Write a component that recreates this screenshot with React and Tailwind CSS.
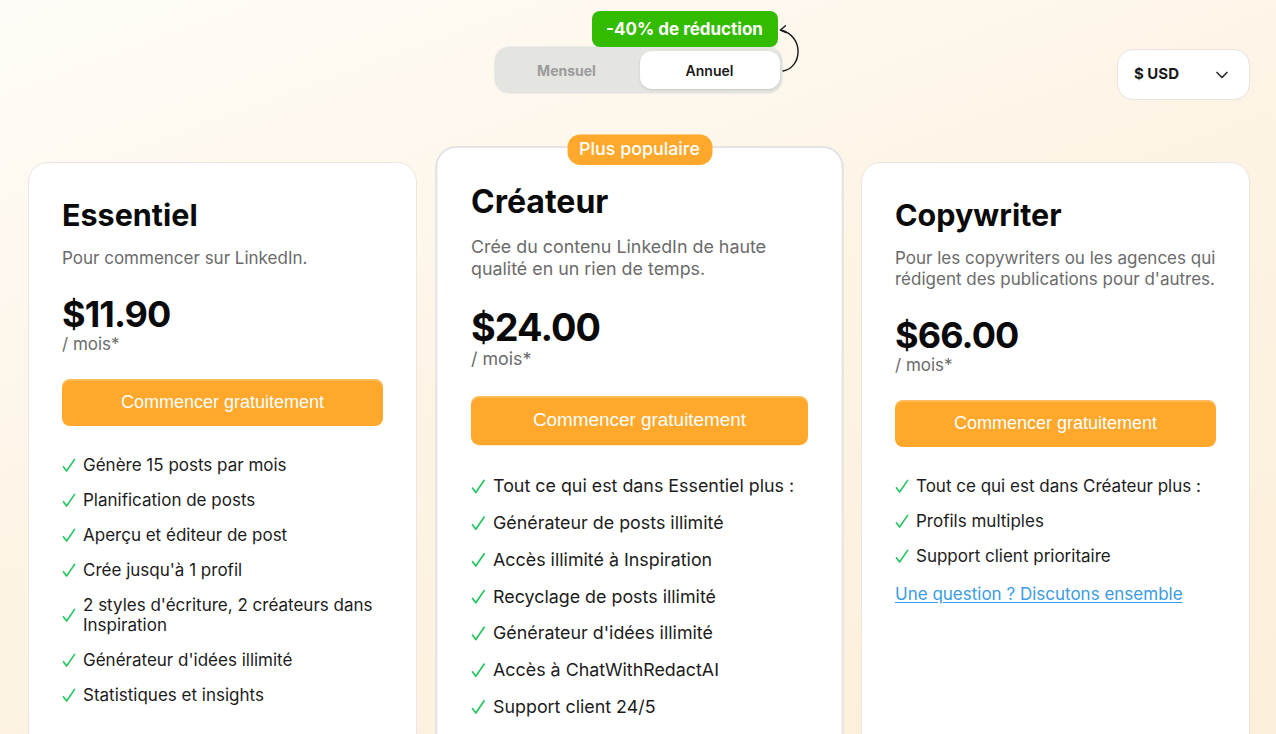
import React, { useState } from 'react';
import { ChevronDown } from 'lucide-react';

const plans = [
  {
    key: 'essentiel',
    name: 'Essentiel',
    desc: 'Pour commencer sur LinkedIn.',
    price: '$11.90',
    features: [
      'Génère 15 posts par mois',
      'Planification de posts',
      'Aperçu et éditeur de post',
      "Crée jusqu'à 1 profil",
      "2 styles d'écriture, 2 créateurs dans Inspiration",
      "Générateur d'idées illimité",
      'Statistiques et insights',
    ],
  },
  {
    key: 'createur',
    name: 'Créateur',
    desc: 'Crée du contenu LinkedIn de haute qualité en un rien de temps.',
    price: '$24.00',
    popular: true,
    features: [
      'Tout ce qui est dans Essentiel plus :',
      'Générateur de posts illimité',
      'Accès illimité à Inspiration',
      'Recyclage de posts illimité',
      "Générateur d'idées illimité",
      'Accès à ChatWithRedactAI',
      'Support client 24/5',
    ],
  },
  {
    key: 'copywriter',
    name: 'Copywriter',
    desc: "Pour les copywriters ou les agences qui rédigent des publications pour d'autres.",
    price: '$66.00',
    link: 'Une question ? Discutons ensemble',
    features: [
      'Tout ce qui est dans Créateur plus :',
      'Profils multiples',
      'Support client prioritaire',
    ],
  },
];

function Check() {
  return (
    <svg width="14" height="16" viewBox="0 0 14 16" className="shrink-0">
      <path d="M1.4 9.8 L4.6 14 L12.6 2.4" fill="none" stroke="#22c55e" strokeWidth="1.6" strokeLinecap="round" strokeLinejoin="round" />
    </svg>
  );
}

function PlanCard({ plan }) {
  return (
    <div
      className={
        plan.popular
          ? 'relative w-[389px] min-h-[600px] shrink-0 origin-top scale-105 rounded-[20px] border-2 border-[#e3e3e3] bg-white px-[32px] pt-[33px]'
          : 'relative mt-[16px] w-[389px] min-h-[600px] shrink-0 rounded-[20px] border border-[#ebe6de] bg-white px-[33px] pt-[34px]'
      }
    >
      {plan.popular && (
        <div className="absolute left-1/2 -top-[13px] -translate-x-1/2 h-[29px] w-[138px] rounded-[12px] bg-[#ffa82b] flex items-center justify-center text-white text-[17px] font-medium">
          Plus populaire
        </div>
      )}

      <h2 className="text-[30.5px] leading-[36px] font-bold text-[#0a0a0a]">{plan.name}</h2>
      <p className="mt-[15px] text-[17px] leading-[21px] text-[#6b6b6b]">{plan.desc}</p>

      <p className="mt-[27px] text-[36px] leading-[36px] font-bold tracking-tight text-[#0a0a0a]">{plan.price}</p>
      <p className="text-[17px] leading-[24px] text-[#6b6b6b]">/ mois*</p>

      <button className="mt-[23px] w-full h-[47px] rounded-lg bg-[#ffa82b] shadow-[inset_0_2px_0_rgba(255,255,255,0.22)] text-white text-[18px] font-['Liberation_Sans',Arial,sans-serif]">
        Commencer gratuitement
      </button>

      <ul className="mt-[29px] flex flex-col gap-[15px]">
        {plan.features.map(f => (
          <li key={f} className="flex items-center gap-[7px] text-[17px] leading-[20px] text-[#1c1c1c]">
            <Check />
            <span>{f}</span>
          </li>
        ))}
      </ul>

      {plan.link && (
        <a href="#" className="block mt-[18px] text-[17px] leading-[20px] text-[#3a9be6] underline underline-offset-2">
          {plan.link}
        </a>
      )}
    </div>
  );
}

export default function App() {
  const [billing, setBilling] = useState('annuel');

  return (
    <div className="h-[734px] overflow-hidden font-['Inter',sans-serif] bg-[linear-gradient(160deg,#fffcf7_0%,#fdf4e6_45%,#fcefd9_100%)]">
      {/* Header */}
      <div className="grid grid-cols-[1fr_auto_1fr] h-[146px]">
        <div />
        <div className="pt-[46px]">
          <div className="relative">
            <div className="absolute right-[5px] -top-[35px] z-10 h-[36px] w-[186px] rounded-lg bg-[#33bb00] flex items-center justify-center pt-[2px] text-white text-[17px] font-bold">
              -40% de réduction
            </div>
            <svg className="absolute left-[280px] -top-[24px]" width="34" height="60" viewBox="0 0 34 60" fill="none">
              <path d="M9 49 C 28 46, 31 14, 6.5 8" stroke="#1a1a1a" strokeWidth="1.4" strokeLinecap="round" />
              <path d="M6.5 8 L11.5 3.8 M6.5 8 L12 10.6" stroke="#1a1a1a" strokeWidth="1.4" strokeLinecap="round" />
            </svg>
            <div className="flex w-[289px] h-[48px] rounded-[15px] bg-[#e4e4e1] border border-[#ebebe8] pl-[2px] pr-[2px] py-[4px]">
              <button
                onClick={() => setBilling('mensuel')}
                className={billing === 'mensuel'
                  ? 'flex-1 rounded-xl bg-white text-[14px] font-semibold text-[#1a1a1a] shadow-sm'
                  : 'flex-1 rounded-xl text-[14px] font-bold text-[#9b9b9b]'}
              >
                Mensuel
              </button>
              <button
                onClick={() => setBilling('annuel')}
                className={billing === 'annuel'
                  ? 'ml-[3px] flex-1 rounded-xl bg-white text-[14px] font-semibold text-[#1a1a1a] shadow-sm'
                  : 'flex-1 rounded-xl text-[14px] font-bold text-[#9b9b9b]'}
              >
                Annuel
              </button>
            </div>
          </div>
        </div>
        <div className="flex justify-end pr-[26px] pt-[49px]">
          <button className="h-[51px] w-[133px] rounded-2xl border border-[#e7e3dd] bg-white flex items-center justify-between pl-[16px] pr-[17px]">
            <span className="text-[15px] font-bold text-[#1a1a1a]">$ USD</span>
            <ChevronDown size={20} strokeWidth={2} className="text-[#2a2a2a]" />
          </button>
        </div>
      </div>

      {/* Cards */}
      <div className="flex items-start gap-[27.5px] px-[28px]">
        {plans.map(p => <PlanCard key={p.key} plan={p} />)}
      </div>
    </div>
  );
}
